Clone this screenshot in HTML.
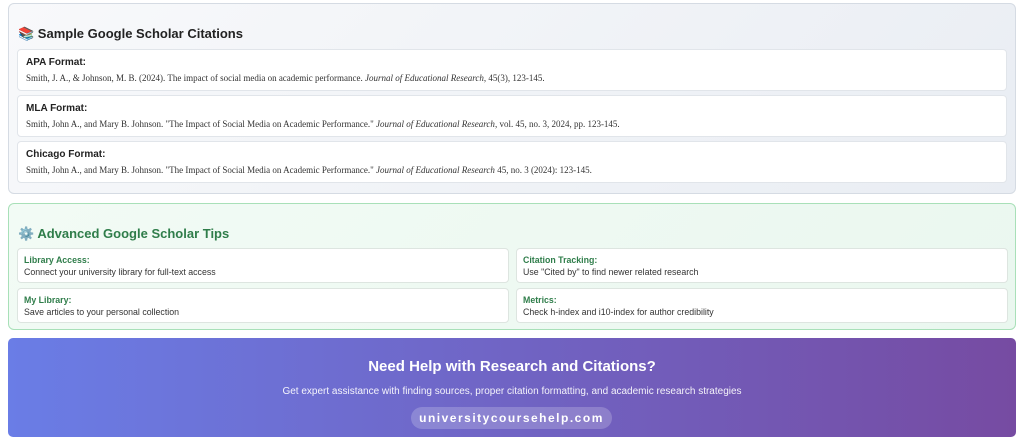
<!DOCTYPE html>
<html><head><meta charset="utf-8"><style>
*{box-sizing:border-box;margin:0;padding:0}
body{width:1024px;height:445px;background:#fff;font-family:"Liberation Sans",sans-serif;position:relative;overflow:hidden}
.s1{position:absolute;left:8px;top:3px;width:1008px;height:191px;border:1px solid #d5dbe3;border-radius:6px;background:linear-gradient(135deg,#f8f9fb,#e9edf3)}
.h{position:absolute;left:9px;font-weight:bold;font-size:13px}
.c{position:absolute;left:8px;width:990px;height:42px;background:#fff;border:1px solid #e1e5ea;border-radius:4px;padding:7px 0 0 8px}
.c b{display:block;font-size:10px;color:#222}
.c p{font-family:"Liberation Serif",serif;font-size:9px;color:#333;margin-top:5px}
.s2{position:absolute;left:8px;top:203px;width:1008px;height:127px;border:1px solid #a8e0b8;border-radius:6px;background:linear-gradient(135deg,#f2fbf5,#eaf7ef)}
.t{position:absolute;width:492px;height:35px;background:#fff;border:1px solid #dde5e0;border-radius:4px;padding:6px 0 0 6px;font-size:8.8px;color:#333}
.t b{display:block;color:#2f7d4a;margin-bottom:2px}
.b{position:absolute;left:8px;top:338px;width:1008px;height:99px;border-radius:5px;background:linear-gradient(90deg,#6a7de6,#764ba2);color:#fff;text-align:center}
</style></head><body>
<div class="s1">
<div class="h" style="top:22px;color:#222">📚 Sample Google Scholar Citations</div>
<div class="c" style="top:45px"><b>APA Format:</b><p>Smith, J. A., &amp; Johnson, M. B. (2024). The impact of social media on academic performance. <i>Journal of Educational Research</i>, 45(3), 123-145.</p></div>
<div class="c" style="top:91px"><b>MLA Format:</b><p>Smith, John A., and Mary B. Johnson. "The Impact of Social Media on Academic Performance." <i>Journal of Educational Research</i>, vol. 45, no. 3, 2024, pp. 123-145.</p></div>
<div class="c" style="top:137px"><b>Chicago Format:</b><p>Smith, John A., and Mary B. Johnson. "The Impact of Social Media on Academic Performance." <i>Journal of Educational Research</i> 45, no. 3 (2024): 123-145.</p></div>
</div>
<div class="s2">
<div class="h" style="top:22px;color:#2f7d4a">⚙️ Advanced Google Scholar Tips</div>
<div class="t" style="left:8px;top:44px"><b>Library Access:</b>Connect your university library for full-text access</div>
<div class="t" style="left:507px;top:44px"><b>Citation Tracking:</b>Use "Cited by" to find newer related research</div>
<div class="t" style="left:8px;top:84px"><b>My Library:</b>Save articles to your personal collection</div>
<div class="t" style="left:507px;top:84px"><b>Metrics:</b>Check h-index and i10-index for author credibility</div>
</div>
<div class="b">
<div style="position:absolute;top:20px;width:100%;font-size:15px;font-weight:bold">Need Help with Research and Citations?</div>
<div style="position:absolute;top:48px;width:100%;font-size:10px;opacity:.92">Get expert assistance with finding sources, proper citation formatting, and academic research strategies</div>
<div style="position:absolute;top:69px;left:403px;width:201px;height:22px;border-radius:11px;background:rgba(255,255,255,.2);font-size:12px;font-weight:bold;letter-spacing:1.5px;line-height:22px">universitycoursehelp.com</div>
</div>
</body></html>
